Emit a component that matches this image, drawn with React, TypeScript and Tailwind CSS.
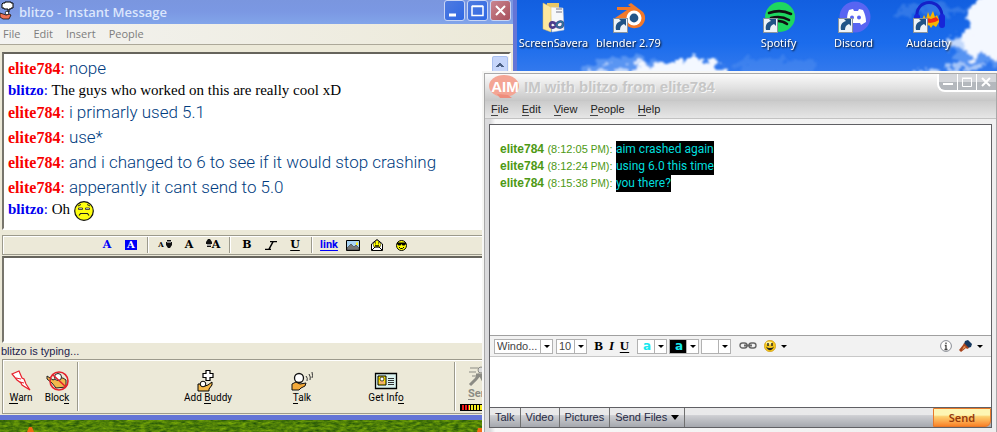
import type { ReactNode } from "react";

const navy = "text-[#003c80] font-[Roboto,sans-serif] text-[17px] font-light";

function Wallpaper() {
  return (
    <svg className="absolute inset-0 h-full w-full" viewBox="0 0 997 432" preserveAspectRatio="none" aria-hidden="true">
      <defs>
        <linearGradient id="sky" x1="0" y1="0" x2="0" y2="1">
          <stop offset="0" stopColor="#125fe0" />
          <stop offset="0.1" stopColor="#1b6cec" />
          <stop offset="0.2" stopColor="#3f80ee" />
        </linearGradient>
        <filter id="fluff" x="-20%" y="-50%" width="140%" height="200%">
          <feTurbulence type="fractalNoise" baseFrequency="0.09" numOctaves="4" seed="4" result="n" />
          <feDisplacementMap in="SourceGraphic" in2="n" scale="22" xChannelSelector="R" yChannelSelector="G" />
          <feGaussianBlur stdDeviation="1" />
        </filter>
        <filter id="grass" x="0" y="0" width="100%" height="100%" colorInterpolationFilters="sRGB">
          <feTurbulence type="fractalNoise" baseFrequency="0.15 0.4" numOctaves="3" seed="2" />
          <feColorMatrix values="0.5 0 0 0 0.06  0.5 0 0 0 0.25  0 0 0 0 0.03  0 0 0 0 1" />
        </filter>
      </defs>
      <rect width="997" height="432" fill="url(#sky)" />
      <g filter="url(#fluff)">
        <g fill="#78aaf5" opacity="0.6">
          <ellipse cx="632" cy="70" rx="52" ry="12" />
          <ellipse cx="775" cy="66" rx="45" ry="7" opacity="0.4" />
          <ellipse cx="985" cy="46" rx="36" ry="20" />
          <ellipse cx="935" cy="10" rx="40" ry="5" opacity="0.5" />
        </g>
        <g fill="#f4f8ff">
          <ellipse cx="678" cy="76" rx="50" ry="15" />
          <ellipse cx="692" cy="70" rx="26" ry="11" />
          <ellipse cx="616" cy="78" rx="35" ry="9" opacity="0.7" />
          <circle cx="990" cy="16" r="20" />
          <ellipse cx="988" cy="38" rx="28" ry="19" />
          <ellipse cx="965" cy="42" rx="14" ry="8" opacity="0.7" />
          <ellipse cx="923" cy="74" rx="13" ry="6" opacity="0.7" />
          <ellipse cx="964" cy="67" rx="20" ry="4" opacity="0.6" />
        </g>
      </g>
      <rect y="412" width="997" height="20" filter="url(#grass)" />
      <path d="M27 432l2-5h3l2 5zM477 432l1-4h4l1 4z" fill="#f36a12" />
    </svg>
  );
}

function Shortcut() {
  return (
    <g>
      <rect x="0.5" y="17.5" width="14" height="14" fill="#eef3f8" stroke="#8a949e" />
      <path d="M3 29c-1-5 1-8 5-9l-2-2h7v7l-2-2c-3 1-4 3-4 6z" fill="#215386" />
    </g>
  );
}

function DesktopIcon({ label, column, children }: { label: string; column: string; children: ReactNode }) {
  return (
    <button type="button" className={`${column} flex flex-col items-center pt-px`}>
      <svg className="h-8 w-8 overflow-visible" viewBox="0 0 32 32" aria-hidden="true">{children}</svg>
      <span className="whitespace-nowrap text-[11px] leading-5 text-white [text-shadow:1px_1px_2px_#000]">{label}</span>
    </button>
  );
}

function DesktopIcons() {
  return (
    <div className="absolute left-[516px] top-0 grid grid-cols-[repeat(6,75px)] font-['Noto_Sans','Open_Sans',sans-serif]">
      <DesktopIcon label="ScreenSavera" column="col-start-1">
        <path d="M9 2h12v26H9z" fill="#e8c766" />
        <path d="M12 6l13 1 1 22-12 2z" fill="#f6f8fa" stroke="#c5c9cf" strokeWidth="0.5" />
        <path d="M18 8h6M18 11h6" stroke="#778" strokeWidth="1" />
        <path d="M5 2l8 4v25l-8-3z" fill="#fbe79f" stroke="#d9b95a" strokeWidth="0.5" />
        <path d="M18 24c-2-4-6-3-6 0s4 4 6 0 7-5 7-1-5 5-7 1z" fill="none" stroke="#4d3c8d" strokeWidth="2.6" />
        <path d="M18 24c2-4 7-5 7-1s-5 5-7 1" fill="none" stroke="#2b7d9b" strokeWidth="1.4" />
      </DesktopIcon>
      <DesktopIcon label="blender 2.79" column="col-start-2">
        <path d="M15 4l3-2 12 9c4 5 2 12-3 15-7 3-15 0-15-7H3l-1-2 12-8H4V6h14z" fill="#f3792a" />
        <circle cx="21" cy="17" r="7.5" fill="#fff" />
        <circle cx="21" cy="17" r="4.4" fill="#225487" />
        <Shortcut />
      </DesktopIcon>
      <DesktopIcon label="Spotify" column="col-start-4">
        <circle cx="17" cy="16" r="15" fill="#1ed760" />
        <path d="M6 12c8-3 16-2 22 1M8 17c7-2 13-1 18 2M9 21c6-2 11-1 15 2" fill="none" stroke="#111" strokeWidth="2.6" strokeLinecap="round" />
        <Shortcut />
      </DesktopIcon>
      <DesktopIcon label="Discord" column="col-start-5">
        <circle cx="17" cy="16" r="15.5" fill="#5865f2" />
        <path d="M11 9l4-1 1 2h4l1-2 4 1c2 4 3 8 3 12l-5 3-1-2h-7l-2 2-4-3c0-4 0-8 2-12z" fill="#fff" />
        <circle cx="14" cy="16.500" r="2" fill="#5865f2" />
        <circle cx="21" cy="16.500" r="2" fill="#5865f2" />
        <Shortcut />
      </DesktopIcon>
      <DesktopIcon label="Audacity" column="col-start-6">
        <path d="M4 18C1-4 31-4 29 18" fill="none" stroke="#1420c8" strokeWidth="3" />
        <path d="M9 19l2-5 2 4 2-7 2 5 3-6 2 6 2-2 2 5v2l-3 5-3-2-2 3-2-3-3 2-2-4z" fill="#f7b500" />
        <path d="M9 19l5-2 4 1 5-2 3 3-4 2-5 1-4-1z" fill="#f02a18" />
        <rect x="1" y="13" width="6" height="14" rx="3" fill="#1726d8" />
        <rect x="26" y="13" width="6" height="14" rx="3" fill="#1726d8" />
        <Shortcut />
      </DesktopIcon>
    </div>
  );
}

function ChatLine({ who, mine, children }: { who: string; mine?: boolean; children: ReactNode }) {
  return (
    <p className={mine ? "text-[15px] leading-[19px]" : "text-[16px] leading-[25px]"}>
      <span className={mine ? "text-[#0000f0]" : "text-[#f80000]"}><b>{who}</b>:</span>{" "}
      {children}
    </p>
  );
}

function XpButton({ label, red, children }: { label: string; red?: boolean; children: ReactNode }) {
  return (
    <button type="button" aria-label={label}
      className={`h-[21px] w-[21px] rounded-[3px] border border-[#c8d5f5] ${red ? "bg-linear-to-br from-[#c98590] to-[#a8505c]" : "bg-linear-to-br from-[#4f7be0] to-[#2f68e4]"}`}>
      <svg viewBox="0 0 19 19" className="h-[19px] w-[19px]" fill="none" stroke="#fff">{children}</svg>
    </button>
  );
}

function Tool({ label, children }: { label: string; children: ReactNode }) {
  return (
    <button type="button" aria-label={label} className="flex h-4 w-6 items-center justify-center font-['DejaVu_Serif',serif] text-[11px] font-bold leading-4 text-black">
      {children}
    </button>
  );
}

function Rule() {
  return <span className="mx-1 h-4 w-0.5 border-l border-[#9c9a8c] bg-white" />;
}

function Action({ label, hot, className, children }: { label: string; hot: number; className: string; children: ReactNode }) {
  return (
    <button type="button" className={`${className} flex flex-col items-center`}>
      <svg viewBox="0 0 24 22" className="h-[22px] w-6" aria-hidden="true">{children}</svg>
      <span className="whitespace-nowrap font-[Roboto,sans-serif] text-[10px] leading-3 text-black">
        {label.slice(0, hot)}
        <span className="border-b border-current">{label[hot]}</span>
        {label.slice(hot + 1)}
      </span>
    </button>
  );
}

function OldWindow() {
  return (
    <section className="absolute left-0 top-0 flex w-[517px] flex-col border-b-[5px] border-r-4 border-[#6475d6] bg-[#ece9d8]">
      <header className="flex h-6 items-center bg-linear-to-b from-[#7a96df] via-[#7b98e3] to-[#82a5ea] pr-0.5">
        <svg viewBox="0 0 14 20" className="mb-1 h-5 w-3.5" aria-hidden="true">
          <path d="M3 3h2V2h6v1h2v5h-2v1H9v3H8V9H4V8H2V4z" fill="#fff" stroke="#000" />
          <path d="M0 13l3 1 3 1 3-1 2 1-2 4H3l-3-2z" fill="#ef7355" stroke="#000" strokeWidth="0.7" />
          <circle cx="7" cy="13" r="1.8" fill="#fff" stroke="#000" strokeWidth="0.7" />
        </svg>
        <h1 className="ml-[5px] flex-1 text-[13px] font-semibold leading-6 text-[#dbe6fc]">blitzo - Instant Message</h1>
        <div className="flex gap-0.5 pb-[3px]">
          <XpButton label="Minimize"><path d="M4 14h7" strokeWidth="3" /></XpButton>
          <XpButton label="Maximize"><path d="M4 5.500h11v9H4zM4 5h11" strokeWidth="1.5" /></XpButton>
          <XpButton label="Close" red><path d="M5 5l9 9M14 5l-9 9" strokeWidth="2" /></XpButton>
        </div>
      </header>
      <nav className="flex h-[21px] items-center gap-[13px] border-b border-[#aca899] bg-linear-to-r from-[#f3f3f1] to-[#ece9d8] pl-[3px] text-[11px] text-[#7d7d7d]">
        <button type="button">File</button>
        <button type="button">Edit</button>
        <button type="button">Insert</button>
        <button type="button">People</button>
      </nav>
      <div className="mx-0.5 mt-[7px] flex h-[178px] justify-between border-2 border-b-white border-l-[#77756c] border-r-white border-t-[#66645c] bg-white pl-[4px] pt-[2px]">
        <div className="font-['Liberation_Serif',serif] text-black">
          <ChatLine who="elite784"><span className={navy}>nope</span></ChatLine>
          <ChatLine who="blitzo" mine>The guys who worked on this are really cool xD</ChatLine>
          <ChatLine who="elite784"><span className={navy}>i primarly used 5.1</span></ChatLine>
          <ChatLine who="elite784"><span className={navy}>use*</span></ChatLine>
          <ChatLine who="elite784"><span className={navy}>and i changed to 6 to see if it would stop crashing</span></ChatLine>
          <ChatLine who="elite784"><span className={navy}>apperantly it cant send to 5.0</span></ChatLine>
          <ChatLine who="blitzo" mine>
            Oh{" "}
            <svg viewBox="0 0 20 20" className="inline h-5 w-5 align-middle" role="img" aria-label="sad">
              <circle cx="10" cy="10" r="9.300" fill="#ffff10" stroke="#111" strokeWidth="1.2" />
              <path d="M4 5l3-1.500M13 3.500L16 5" fill="none" stroke="#222" />
              <path d="M4.500 7h4v1.500h-4zM11.500 7h4v1.500h-4z" fill="#fff" stroke="#222" strokeWidth="0.8" />
              <path d="M5 14.500l1.500-2h7l1.500 2" fill="none" stroke="#222" strokeWidth="1.200" />
            </svg>
          </ChatLine>
        </div>
        <div className="w-[17px] bg-[#f6f5f0]">
          <button type="button" aria-label="Scroll up" className="flex h-[17px] w-4 items-center justify-center rounded-xs border border-[#a9c0f0] bg-[#c6d6fb]">
            <svg viewBox="0 0 8 5" className="h-[5px] w-2"><path d="M0 5l4-4 4 4H6L4 3 2 5z" fill="#4d6185" stroke="#4d6185" /></svg>
          </button>
        </div>
      </div>
      <div className="ml-0.5 mt-[5px] flex h-5 items-center border border-r-0 border-[#9c9a8c] pl-[92px] shadow-[inset_1px_1px_0_#fff]">
        <Tool label="Text color"><span className="text-[#0000f8]">A</span></Tool>
        <Tool label="Background color"><span className="bg-[#0000f8] px-0.5 text-[10px] leading-[10px] text-white">A</span></Tool>
        <Rule />
        <Tool label="Smaller"><span className="text-[7px]">A</span>
          <svg viewBox="0 0 6 8" className="mb-0.5 ml-0.5 h-2 w-1.5"><path d="M1 0h4v2h1v3L4 8H2L0 5V2h1z" fill="#111" /><path d="M1 1h4v2H1z" fill="#888" /></svg>
        </Tool>
        <Tool label="Normal size">A</Tool>
        <Tool label="Larger">
          <svg viewBox="0 0 6 8" className="mb-1 h-2 w-1.5"><path d="M2 0h2l2 3v2H5v3H1V5H0V3z" fill="#111" /><path d="M1 5h4v2H1z" fill="#999" /></svg>
          A
        </Tool>
        <Rule />
        <Tool label="Bold">B</Tool>
        <Tool label="Italic">
          <svg viewBox="0 0 12 9" className="h-[9px] w-3"><path d="M5 .5h7M0 8.500h6M8.500 0L3.500 9" stroke="#000" strokeWidth="1.5" /></svg>
        </Tool>
        <Tool label="Underline"><span className="leading-[10px] underline underline-offset-2">U</span></Tool>
        <Rule />
        <Tool label="Link"><a href="#link" className="font-[Roboto,sans-serif] text-[#0000f8] underline underline-offset-2">link</a></Tool>
        <Tool label="Insert picture">
          <svg viewBox="0 0 14 11" className="h-[11px] w-3.5"><path d="M.5.5h13v10H.5z" fill="#a9d4f5" stroke="#000" /><path d="M1 8l4-4 3 3 2-2 3 3v2H1z" fill="#777" stroke="#222" strokeWidth="0.5" /><path d="M10 2l1 1 1-1v3h-2z" fill="#fe2" /></svg>
        </Tool>
        <Tool label="Greeting">
          <svg viewBox="0 0 12 12" className="h-3 w-3"><path d="M.5 5L6 .5 11.500 5v6.500H.5z" fill="#fff" stroke="#000" /><path d="M2 5l4-4 4 4-1 3H3z" fill="#ff0" stroke="#000" strokeWidth="0.5" /><path d="M4 4h1M7 4h1M4 6l2 1 2-1M1 11l3-3h4l3 3" stroke="#000" fill="none" /></svg>
        </Tool>
        <Tool label="Smileys">
          <svg viewBox="0 0 11 11" className="h-[11px] w-[11px]"><circle cx="5.500" cy="5.500" r="5" fill="#ff0" stroke="#000" /><path d="M1 2.500h9V4L8.500 5.500h-2L5.500 4l-1 1.500h-2L1 4z" fill="#000" /><path d="M3 7l1.500 1.500h2L8 7" stroke="#000" fill="none" /></svg>
        </Tool>
      </div>
      <textarea aria-label="Message to blitzo" className="mx-0.5 mt-px h-[87px] resize-none border-2 border-b-white border-l-[#77756c] border-r-white border-t-[#66645c] bg-white" />
      <p className="h-4 pl-px font-['Liberation_Sans',sans-serif] text-[11px] leading-4 text-[#1c1c4c]">blitzo is typing...</p>
      <footer className="mb-px ml-0.5 flex h-[55px] items-start border border-r-0 border-[#9c9a8c] py-0.5 shadow-[inset_1px_1px_0_#fff]">
        <Action label="Warn" hot={0} className="w-9 pt-2">
          <path d="M3 4l7-3 3 7 2 1 2 5 4 6-8-5-1-2-4-3z" fill="#fff" stroke="#e8202c" strokeWidth="1.2" />
          <path d="M7 8l5 1M11 12l4 1" stroke="#e8202c" />
        </Action>
        <Action label="Block" hot={4} className="w-9 pt-2">
          <path d="M2 6l6 4 4-2h6l3 2v7l-10 1-4-5-5-4z" fill="#f2b84c" stroke="#222" />
          <circle cx="13" cy="7" r="3.500" fill="#fff" stroke="#222" />
          <circle cx="14" cy="11" r="9" fill="none" stroke="#e3202c" strokeWidth="1.6" />
          <path d="M8 5l13 12" stroke="#e3202c" strokeWidth="1.6" />
        </Action>
        <span className="ml-0.5 h-[49px] w-0.5 border-l border-[#9c9a8c] bg-white" />
        <Action label="Add Buddy" hot={4} className="ml-[104px] w-[50px] pt-2">
          <path d="M10 .5h4v3h3v4h-3v3h-4v-3H7v-4h3z" fill="#fff" stroke="#000" strokeWidth="1.2" />
          <path d="M2 14h4l3 2 3-1 4-3v3l-3 4v2H2z" fill="#f2b84c" stroke="#000" />
          <circle cx="7" cy="14" r="2.800" fill="#fff" stroke="#000" />
        </Action>
        <Action label="Talk" hot={0} className="ml-[42px] w-[54px] pt-2">
          <path d="M2 14l4-2 4 2 6-1-1 3-4 2-2 2H2z" fill="#f2a93b" stroke="#111" />
          <circle cx="9" cy="8" r="4.500" fill="#fff" stroke="#111" strokeWidth="1.3" />
          <path d="M16 6q2 2 1 5M19 4q2 3 1 6M22 2q1 4 0 6" fill="none" stroke="#333" />
        </Action>
        <Action label="Get Info" hot={7} className="ml-[30px] w-[54px] pt-2">
          <path d="M1.500 3.500h21v15h-21z" fill="#d9f1ee" stroke="#000" strokeWidth="1.3" />
          <path d="M4 6h8v9H4z" fill="#ffe600" stroke="#000" />
          <path d="M5 14l1-3h4l1 3z" fill="#f2b070" /><circle cx="8" cy="9" r="2" fill="#fff" stroke="#000" strokeWidth="0.7" />
          <path d="M14 8.500h6M14 10.500h6M14 12.500h6M14 14.500h6" stroke="#333" />
        </Action>
        <span className="ml-[41px] h-[49px] w-0.5 border-l border-[#9c9a8c] bg-white" />
        <div className="ml-1 flex flex-col items-start pt-1 text-[#8b8b84]">
          <button type="button" className="flex flex-col items-start">
            <svg viewBox="0 0 24 22" className="ml-2 h-[22px] w-6" aria-hidden="true"><path d="M2 2h8M1 6h7M4 10h4" stroke="#8b8b84" /><circle cx="13" cy="4" r="3" fill="#ddd" stroke="#8b8b84" /><path d="M12 8l-4 5-6 6M12 8l3 6 5 5M8 9h9" stroke="#8b8b84" strokeWidth="3" fill="none" /></svg>
            <span className="ml-2 font-[Roboto,sans-serif] text-[11px] font-bold leading-3"><span className="underline underline-offset-2">S</span>end</span>
          </button>
          <div className="mt-1 h-[7px] w-[50px] border border-black bg-[repeating-linear-gradient(90deg,#000_0_1px,#f8ee20_1px_3px)]"><div className="h-full w-2 bg-[repeating-linear-gradient(90deg,#000_0_1px,#f01818_1px_3px)]" /></div>
        </div>
      </footer>
    </section>
  );
}

function Caret() {
  return <svg viewBox="0 0 6 3" className="h-[3px] w-1.5" aria-hidden="true"><path d="M0 0h6L3 3z" fill="#000" /></svg>;
}

function Picker({ label, value, width, face }: { label: string; value: string; width: string; face: string }) {
  return (
    <span className={`${width} grid h-[15px] border border-[#b2b2b2] bg-white`}>
      <select aria-label={label} className={`col-start-1 row-start-1 min-w-0 appearance-none pl-0.5 leading-[13px] ${face}`}>
        <option>{value}</option>
      </select>
      <span className="pointer-events-none col-start-1 row-start-1 flex w-3 items-center justify-center justify-self-end border-l border-[#b2b2b2] bg-white"><Caret /></span>
    </span>
  );
}

function AimLine({ time, children }: { time: string; children: ReactNode }) {
  return (
    <p className="h-[17px] whitespace-nowrap text-[12px] leading-[17px] text-[#4d9914]">
      <b>elite784</b> <span className="text-[11px]">({time} <span className="text-[10px]">PM</span>):</span>{" "}
      <span className="inline-block bg-black font-[Roboto,sans-serif] text-[#00dede]">{children}</span>
    </p>
  );
}

const menus = ["File", "Edit", "View", "People", "Help"];
const tab = "flex items-center border-r border-[#707070] px-[5px] text-[11px] text-[#262a44]";

function NewWindow() {
  return (
    <section className="absolute bottom-0 left-[482px] right-0 top-[71px] flex flex-col border-l-2 border-t-2 border-[#f7f7f5] bg-[#d2d2d4] font-['Liberation_Sans',sans-serif]">
      <div className="flex flex-1 flex-col border-x border-t border-[#a9a9a9]">
        <header className="flex h-[27px] items-start justify-between bg-linear-to-b from-[#fbfbfb] via-[#e2e2e2] to-[#c6c6c6] pl-1">
          <div className="flex items-center">
            <svg viewBox="0 0 32 25" className="h-[25px] w-8" aria-label="AIM" role="img">
              <ellipse cx="15" cy="12" rx="15" ry="11" fill="#f4a594" />
              <path d="M8 20l3 4h12l-4-3z" fill="#ee8d7c" />
              <text x="16" y="18" textAnchor="middle" fontFamily="Liberation Sans" fontWeight="bold" fontSize="15" fill="#fff">AIM</text>
            </svg>
            <h2 className="ml-[3px] text-[15px] font-bold leading-[25px] text-[#c6c6c6] [text-shadow:1px_1px_0_#f6f6f6]">IM with blitzo from elite784</h2>
          </div>
          <div className="flex h-[18px] divide-x divide-white overflow-hidden rounded-bl-lg border-b-2 border-l-2 border-white bg-linear-to-b from-[#d4d6da] from-50% to-[#b4b8bd] to-50%">
            <button type="button" aria-label="Minimize" className="w-[19px]"><svg viewBox="0 0 18 16" className="h-4" fill="none" stroke="#fff"><path d="M4 10h10" strokeWidth="2" /></svg></button>
            <button type="button" aria-label="Maximize" className="w-[19px]"><svg viewBox="0 0 18 16" className="h-4" fill="none" stroke="#fff"><path d="M4.500 4.500h9v8h-9zM4 4h10" /></svg></button>
            <button type="button" aria-label="Close" className="w-[19px]"><svg viewBox="0 0 18 16" className="h-4" fill="none" stroke="#fff"><path d="M5 4l8 8M13 4l-8 8" strokeWidth="2" /></svg></button>
          </div>
        </header>
        <nav className="flex h-[18px] items-center gap-[13px] border-b border-[#c2c2c2] bg-linear-to-b from-[#cbcbcb] to-[#e6e6e6] pl-1.5 text-[11px] text-[#222]">
          {menus.map((m) => (
            <button type="button" key={m}><span className="border-b border-[#444]">{m[0]}</span>{m.slice(1)}</button>
          ))}
        </nav>
        <div className="flex flex-1 flex-col bg-linear-to-r from-[#dadadc] from-1% via-[#f8f8f8] via-2% to-[#efefef] px-1 pb-1">
          <div className="mt-[5px] flex flex-1 flex-col border border-[#606064] bg-white">
            <div className="flex-1 pl-2.5 pt-4">
              <AimLine time="8:12:05">aim crashed again</AimLine>
              <AimLine time="8:12:24">using 6.0 this time</AimLine>
              <AimLine time="8:15:38">you there?</AimLine>
            </div>
            <div className="flex h-[22px] items-center border-y border-b-[#c8c8c8] border-t-[#a0a0a0] bg-[#f2f2f2] pl-1 pr-2 text-[11px] text-[#333]">
              <Picker label="Font" value="Windo..." width="w-[59px]" face="text-[#444]" />
              <span className="w-[3px]" />
              <Picker label="Size" value="10" width="w-[31px]" face="text-[#444]" />
              <div className="ml-[5px] mr-1.5 flex font-['Liberation_Serif',serif] text-[13px] font-bold leading-4 text-black">
                <button type="button" aria-label="Bold" className="w-[13px]">B</button>
                <button type="button" aria-label="Italic" className="w-[13px] italic">I</button>
                <button type="button" aria-label="Underline" className="w-[13px] underline underline-offset-2">U</button>
              </div>
              <div className="flex gap-0.5">
                <Picker label="Text color" value="a" width="w-[30px]" face="pl-[5px] font-['DejaVu_Sans',sans-serif] text-[12px] font-bold text-[#18e8ee]" />
                <Picker label="Highlight color" value="a" width="w-[30px]" face="bg-black pl-[5px] font-['DejaVu_Sans',sans-serif] text-[12px] font-bold text-[#18e8ee]" />
                <Picker label="Background color" value=" " width="w-[30px]" face="text-black" />
              </div>
              <button type="button" aria-label="Insert link" className="ml-2">
                <svg viewBox="0 0 18 10" className="h-2.5 w-[18px]" fill="none" stroke="#666" strokeWidth="1.4"><rect x="1" y="2" width="7" height="5" rx="2.500" /><rect x="10" y="2" width="7" height="5" rx="2.500" /><path d="M5 4.500h8" strokeWidth="2" /></svg>
              </button>
              <button type="button" aria-label="Smileys" className="ml-[7px] flex items-center gap-[5px]">
                <svg viewBox="0 0 12 12" className="h-3 w-3"><circle cx="6" cy="6" r="5.700" fill="#f5c71c" stroke="#c8900a" strokeWidth="0.6" /><ellipse cx="5" cy="3" rx="3" ry="1.500" fill="#fff3a0" /><path d="M4 3v3M8 3v3" stroke="#222" strokeWidth="1.4" /><path d="M2 6.500c2 5 6 5 8 0-2 2-6 2-8 0z" fill="#222" /></svg>
                <Caret />
              </button>
              <span className="flex-1" />
              <button type="button" aria-label="Info">
                <svg viewBox="0 0 12 12" className="h-3 w-3"><circle cx="6" cy="6" r="5.400" fill="#fff" stroke="#888c94" /><path d="M6 2.500v1.500M4.800 5.500H6v4M4.500 9.500h3" fill="none" stroke="#444" strokeWidth="1.300" /></svg>
              </button>
              <button type="button" aria-label="Themes" className="ml-[7px] flex items-center gap-[5px]">
                <svg viewBox="0 0 13 12" className="h-3 w-[13px]"><path d="M6 1l3-1 4 4-1 3-3 1-4-4z" fill="#17395f" /><path d="M5 3l5 5-2 1-1-1-5 4-2-2 4-5z" fill="#a8441d" /><path d="M5 6l2 1-4 3z" fill="#e79a5c" /></svg>
                <Caret />
              </button>
            </div>
            <textarea aria-label="Message to elite784" className="h-[50px] resize-none bg-white" />
            <footer className="flex h-5 border-t border-[#606064] bg-linear-to-b from-[#e9e9ea] from-35% via-[#cdced2] via-40% to-[#a5a8ae]">
              <button type="button" className={tab}>Talk</button>
              <button type="button" className={tab}>Video</button>
              <button type="button" className={tab}>Pictures</button>
              <button type="button" className={`${tab} gap-1`}>Send Files
                <svg viewBox="0 0 8 5" className="h-[5px] w-2" aria-hidden="true"><path d="M0 0h8L4 5z" fill="#000" /></svg>
              </button>
              <span className="flex-1" />
              <button type="button" className="w-[58px] rounded-br-md border border-[#e8792a] bg-linear-to-b from-[#fdf6b4] from-35% via-[#fbd070] via-45% to-[#f98226] font-['Noto_Sans',sans-serif] text-[11px] font-semibold leading-[17px] text-[#943a0e]">Send</button>
            </footer>
          </div>
        </div>
      </div>
    </section>
  );
}

export default function App() {
  return (
    <main className="relative h-screen w-full overflow-hidden font-['Open_Sans','Noto_Sans',sans-serif]">
      <Wallpaper />
      <DesktopIcons />
      <OldWindow />
      <NewWindow />
    </main>
  );
}
